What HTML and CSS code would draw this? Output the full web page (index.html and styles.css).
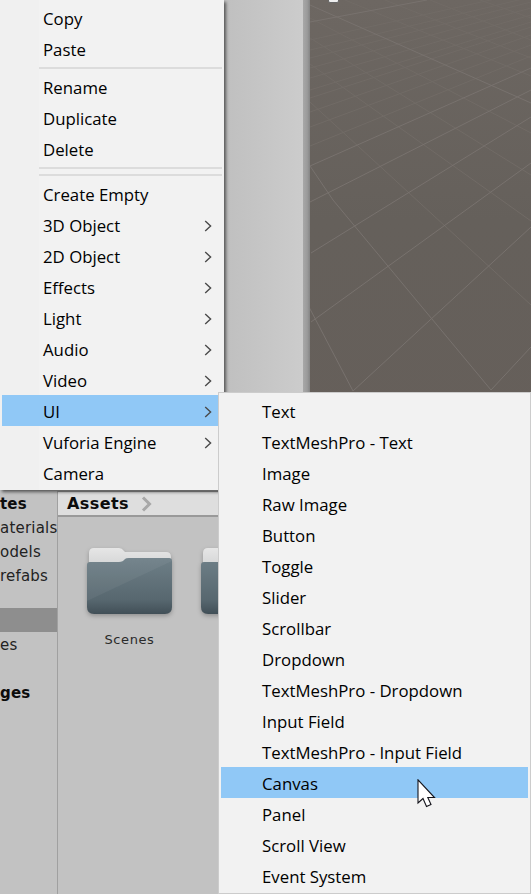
FILE: index.html
```html
<!DOCTYPE html>
<html lang="en">
<head>
  <meta charset="UTF-8" />
  <title>Unity UI menu</title>
  <link rel="stylesheet" href="styles.css">
</head>
<body>
  <svg width="0" height="0" class="defs">
    <defs>
      <symbol id="chev" viewBox="0 0 8 12">
        <path d="M1.2 1 L6.6 6 L1.2 11" fill="none" stroke="#4a4a4a" stroke-width="1.4" />
      </symbol>
      <linearGradient id="folderTab" x1="0" y1="0" x2="0" y2="1">
        <stop offset="0" stop-color="#e6e6e6" />
        <stop offset="1" stop-color="#a2a6a8" />
      </linearGradient>
      <linearGradient id="folderBody" x1="0" y1="0" x2="0" y2="1">
        <stop offset="0" stop-color="#6e7f87" />
        <stop offset="0.75" stop-color="#57676f" />
        <stop offset="1" stop-color="#414f57" />
      </linearGradient>
    </defs>
  </svg>

  <div class="top">
    <div class="hierarchy"></div>
    <div class="divider"></div>
    <div class="scene">
      <div class="gizmo"></div>
      <svg class="grid" viewBox="310 0 221 391" width="221" height="391">
        <g class="minor">
          <path d="M310 40 L531 -9" />
          <path d="M310 50 L531 -3" />
          <path d="M310 58 L531 2" />
          <path d="M310 68 L531 8" />
          <path d="M310 78 L531 15" />
          <path d="M310 90 L531 22" />
          <path d="M310 98 L531 27" />
          <path d="M310 112 L531 35" />
          <path d="M310 127 L531 45" />
          <path d="M310 146 L531 56" />
          <path d="M310 102 L531 305" />
          <path d="M310 64 L531 221" />
          <path d="M310 38 L531 175" />
          <path d="M310 18 L531 133" />
          <path d="M345 0 L531 76" />
          <path d="M385 0 L531 58" />
          <path d="M430 0 L531 40" />
          <path d="M480 0 L531 18" />
        </g>
        <g class="major">
          <path d="M310 5 L531 103" />
          <path d="M310 22 L427 0" />
          <path d="M310 166 L531 68" />
          <path d="M310 166 L333 200 L491 390" />
          <path d="M310 202 L531 90" />
          <path d="M311 253 L531 117" />
          <path d="M311 322 L531 163" />
          <path d="M353 391 L531 227" />
          <path d="M491 390 L531 347" />
          <path d="M309 307 L353 391" />
        </g>
      </svg>
    </div>
  </div>

  <div class="bottom">
    <div class="sidebar">
      <div class="side-row bold">tes</div>
      <div class="side-row">aterials</div>
      <div class="side-row">odels</div>
      <div class="side-row">refabs</div>
      <div class="side-gap"></div>
      <div class="side-row selected"></div>
      <div class="side-row">es</div>
      <div class="side-row"></div>
      <div class="side-row bold">ges</div>
    </div>
    <div class="project">
      <div class="crumbs">
        <span>Assets</span>
        <svg class="crumb-chev" width="12" height="16" viewBox="0 0 12 16"><path d="M2 1.5 L8.5 8 L2 14.5" fill="none" stroke="#a8a8a8" stroke-width="3" /></svg>
      </div>
      <div class="assets">
        <div class="asset">
          <svg class="folder" viewBox="0 0 85 68" width="85" height="68">
            <path d="M2 69 L2 6 Q2 1 7 1 L32 1 Q35 1 37 4 L38 5 L79 5 Q84 5 84 10 L84 30 L2 30 Z" fill="url(#folderTab)" />
            <path d="M0 18 Q0 15 3 15 L32 15 Q36 15 38 12 Q39 11 42 11 L82 11 Q85 11 85 14 L85 60 Q85 67 78 67 L7 67 Q0 67 0 60 Z" fill="url(#folderBody)" />
            <path d="M0 54 L85 14 L82 11 L42 11 Q39 11 38 12 Q36 15 32 15 L3 15 Q0 15 0 18 Z" fill="#fff" opacity="0.05" />
          </svg>
          <div class="asset-name">Scenes</div>
        </div>
        <div class="asset">
          <svg class="folder" viewBox="0 0 85 68" width="85" height="68">
            <path d="M2 69 L2 6 Q2 1 7 1 L32 1 Q35 1 37 4 L38 5 L79 5 Q84 5 84 10 L84 30 L2 30 Z" fill="url(#folderTab)" />
            <path d="M0 18 Q0 15 3 15 L32 15 Q36 15 38 12 Q39 11 42 11 L82 11 Q85 11 85 14 L85 60 Q85 67 78 67 L7 67 Q0 67 0 60 Z" fill="url(#folderBody)" />
          </svg>
        </div>
      </div>
    </div>
  </div>

  <div class="menu main-menu">
    <div class="item">Copy</div>
    <div class="item">Paste</div>
    <div class="sep"></div>
    <div class="item">Rename</div>
    <div class="item">Duplicate</div>
    <div class="item">Delete</div>
    <div class="sep"></div>
    <div class="sep"></div>
    <div class="item">Create Empty</div>
    <div class="item">3D Object<svg class="arrow"><use href="#chev" /></svg></div>
    <div class="item">2D Object<svg class="arrow"><use href="#chev" /></svg></div>
    <div class="item">Effects<svg class="arrow"><use href="#chev" /></svg></div>
    <div class="item">Light<svg class="arrow"><use href="#chev" /></svg></div>
    <div class="item">Audio<svg class="arrow"><use href="#chev" /></svg></div>
    <div class="item">Video<svg class="arrow"><use href="#chev" /></svg></div>
    <div class="item active">UI<svg class="arrow"><use href="#chev" /></svg></div>
    <div class="item">Vuforia Engine<svg class="arrow"><use href="#chev" /></svg></div>
    <div class="item">Camera</div>
  </div>

  <div class="menu sub-menu">
    <div class="item">Text</div>
    <div class="item">TextMeshPro - Text</div>
    <div class="item">Image</div>
    <div class="item">Raw Image</div>
    <div class="item">Button</div>
    <div class="item">Toggle</div>
    <div class="item">Slider</div>
    <div class="item">Scrollbar</div>
    <div class="item">Dropdown</div>
    <div class="item">TextMeshPro - Dropdown</div>
    <div class="item">Input Field</div>
    <div class="item">TextMeshPro - Input Field</div>
    <div class="item active">Canvas</div>
    <div class="item">Panel</div>
    <div class="item">Scroll View</div>
    <div class="item">Event System</div>
  </div>

  <svg class="cursor" width="20" height="30" viewBox="0 0 20 30">
    <path d="M1 0.8 L1 24 L6 19.5 L9.5 27.5 L14 25.5 L10.8 18.5 L17.5 18.5 Z" fill="#fff" stroke="#15151c" stroke-width="1.1" />
  </svg>
</body>
</html>
```

FILE: styles.css
```css
html, body {
  height: 100%;
}
body {
  margin: 0;
  position: relative;
  overflow: hidden;
  display: flex;
  flex-direction: column;
  background: #c2c2c2;
  font-family: 'DejaVu Sans', sans-serif;
  color: #111;
}
.defs {
  position: absolute;
}

/* editor behind the menus */
.top {
  display: flex;
  height: 491px;
  flex: none;
}
.hierarchy {
  width: 303px;
  background: linear-gradient(to right, #c0c0c0 75%, #cccccc);
}
.divider {
  width: 7px;
  background: linear-gradient(to right, #a8a8a8, #9b9b9b 60%, #858585);
}
.scene {
  flex: 1;
  position: relative;
  overflow: hidden;
  background: linear-gradient(to bottom, #6d6762, #65605b 45%, #665f5a);
}
.gizmo {
  position: absolute;
  top: -6px;
  left: 18px;
  width: 9px;
  height: 7px;
  background: #eee;
  border: 1px solid #666;
  border-radius: 2px;
}
.grid {
  display: block;
}
.grid path {
  fill: none;
  stroke-width: 1;
}
.minor path {
  stroke: #716b66;
}
.major path {
  stroke: #78726e;
}

.bottom {
  display: flex;
  flex: 1;
  min-height: 0;
}
.sidebar {
  width: 57px;
  flex: none;
  overflow: hidden;
  border-right: 1px solid #a0a0a0;
  font-size: 15px;
  letter-spacing: 0.2px;
  color: #222;
}
.side-row {
  height: 24px;
  line-height: 26px;
  white-space: nowrap;
}
.side-row.bold {
  font-weight: bold;
  color: #0c0c0c;
}
.side-row.selected {
  background: #8e8e8e;
}
.side-gap {
  height: 21px;
}
.project {
  flex: 1;
  min-width: 0;
}
.crumbs {
  display: flex;
  align-items: center;
  gap: 12px;
  height: 23px;
  padding-left: 9px;
  background: #dedede;
  border-top: 1px solid #999;
  border-bottom: 2px solid #999;
  font-size: 16px;
  font-weight: bold;
  letter-spacing: 0.4px;
  color: #0c0c0c;
}
.assets {
  display: flex;
  gap: 29px;
  padding: 30px 0 0 29px;
}
.asset {
  width: 85px;
  flex: none;
}
.folder {
  display: block;
  filter: drop-shadow(0 2px 2px rgba(0, 0, 0, 0.25));
}
.asset-name {
  margin-top: 17px;
  font-size: 13px;
  letter-spacing: 0.6px;
  text-align: center;
  color: #2a2a2a;
}

/* context menus */
.menu {
  position: absolute;
  box-sizing: border-box;
  display: flex;
  flex-direction: column;
  background: linear-gradient(to right, #f0f0f0 39px, #f2f2f2 39px);
  font-family: 'Open Sans', sans-serif;
  font-size: 16.8px;
  color: #000;
}
.main-menu {
  top: 0;
  left: 0;
  width: 224px;
  height: 490px;
  padding: 2px;
  box-shadow: 2px 2px 3px rgba(0, 0, 0, 0.55);
}
.sub-menu {
  top: 392px;
  left: 218px;
  width: 313px;
  height: 502px;
  padding: 2px;
  border: 1px solid #ccc;
  background: #f2f2f2;
}
.item {
  box-sizing: border-box;
  display: flex;
  flex: none;
  align-items: center;
  justify-content: space-between;
  height: 31px;
  padding: 2px 10px 0 41px;
  white-space: nowrap;
}
.item.active {
  background: #90c8f6;
}
.sep {
  flex: none;
  height: 2px;
  margin: 2.5px 0 2.5px 37px;
  background: #dcdcdc;
}
.arrow {
  width: 8px;
  height: 12px;
}
.crumb-chev {
  display: block;
}
.cursor {
  position: absolute;
  left: 417px;
  top: 779px;
}
```
